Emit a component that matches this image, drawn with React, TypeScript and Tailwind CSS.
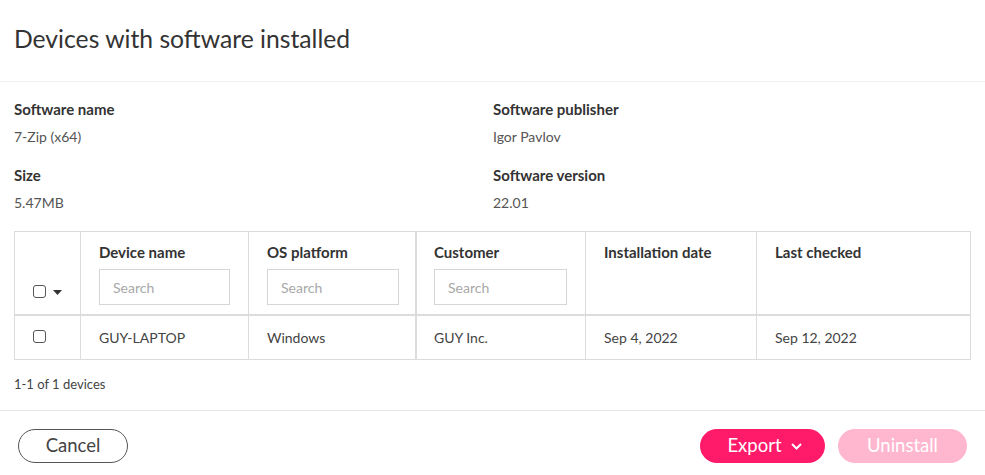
import React from "react";

const font = { fontFamily: '"Source Sans Pro", Lato, "Noto Sans", sans-serif' };

function Checkbox() {
  return <span className="inline-block w-[13px] h-[13px] border border-[#555] rounded-[3px] bg-white" />;
}

function SearchBox({ w }: { w: string }) {
  return (
    <div className={`mt-[7px] h-[36px] ${w} border border-[#d6d6d6] flex items-center pl-[13px] text-[14px] font-normal text-[#a8a8a8]`}>
      Search
    </div>
  );
}

export default function App() {
  return (
    <div className="w-[985px] h-[475px] bg-white text-[#333] overflow-hidden" style={font}>
      <div className="h-[82px] border-b border-[#efefef] flex items-center pl-[14px]">
        <h1 className="text-[24.7px] text-[#333] leading-none -mt-[3px]">Devices with software installed</h1>
      </div>

      <div className="px-[14px] pt-[17px]">
        <div className="grid grid-cols-[479px_1fr] gap-y-[18px]">
          <div>
            <div className="text-[15px] font-bold leading-[20px] text-[#333]">Software name</div>
            <div className="text-[14px] leading-[20px] text-[#555] mt-[8px]">7-Zip (x64)</div>
          </div>
          <div>
            <div className="text-[15px] font-bold leading-[20px] text-[#333]">Software publisher</div>
            <div className="text-[14px] leading-[20px] text-[#555] mt-[8px]">Igor Pavlov</div>
          </div>
          <div>
            <div className="text-[15px] font-bold leading-[20px] text-[#333]">Size</div>
            <div className="text-[14px] leading-[20px] text-[#555] mt-[8px]">5.47MB</div>
          </div>
          <div>
            <div className="text-[15px] font-bold leading-[20px] text-[#333]">Software version</div>
            <div className="text-[14px] leading-[20px] text-[#555] mt-[8px]">22.01</div>
          </div>
        </div>

        <div className="mt-[18px] w-[957px] border border-[#dcdcdc]">
          <div className="grid grid-cols-[66px_168px_168px_169px_171px_1fr] h-[84px] border-b-2 border-[#dcdcdc] text-[15px] font-bold text-[#333]">
            <div className="border-r border-[#dcdcdc] flex items-end pb-[16px] pl-[18px] gap-[7px]">
              <Checkbox />
              <svg width="9" height="5" viewBox="0 0 9 5" className="mb-[3px]"><path d="M0 0h9L4.5 5z" fill="#333" /></svg>
            </div>
            <div className="border-r border-[#dcdcdc] pl-[18px] pt-[10px]">
              <div className="leading-[20px]">Device name</div>
              <SearchBox w="w-[131px]" />
            </div>
            <div className="border-r-2 border-[#dcdcdc] pl-[18px] pt-[10px]">
              <div className="leading-[20px]">OS platform</div>
              <SearchBox w="w-[132px]" />
            </div>
            <div className="border-r border-[#dcdcdc] pl-[17px] pt-[10px]">
              <div className="leading-[20px]">Customer</div>
              <SearchBox w="w-[133px]" />
            </div>
            <div className="border-r border-[#dcdcdc] pl-[18px] pt-[10px]">
              <div className="leading-[20px]">Installation date</div>
            </div>
            <div className="pl-[18px] pt-[10px]">
              <div className="leading-[20px]">Last checked</div>
            </div>
          </div>
          <div className="grid grid-cols-[66px_168px_168px_169px_171px_1fr] h-[43px] text-[14px] text-[#444]">
            <div className="border-r border-[#dcdcdc] flex items-center pl-[18px] pb-[2px]">
              <Checkbox />
            </div>
            <div className="border-r border-[#dcdcdc] flex items-center pl-[18px]">GUY-LAPTOP</div>
            <div className="border-r-2 border-[#dcdcdc] flex items-center pl-[18px]">Windows</div>
            <div className="border-r border-[#dcdcdc] flex items-center pl-[17px]">GUY Inc.</div>
            <div className="border-r border-[#dcdcdc] flex items-center pl-[18px]">Sep 4, 2022</div>
            <div className="flex items-center pl-[18px]">Sep 12, 2022</div>
          </div>
        </div>

        <div className="h-[50px] flex items-center text-[13px] text-[#444]">1-1 of 1 devices</div>
      </div>

      <div className="border-t border-[#e6e6e6] h-[66px] flex items-start justify-between pt-[18px] pl-[18px] pr-[18px]">
        <button className="w-[110px] h-[34px] rounded-full border border-[#555] text-[18.5px] text-[#444] flex items-center justify-center">
          Cancel
        </button>
        <div className="flex items-center gap-[13px]">
          <button className="w-[125px] h-[34px] rounded-full bg-[#ff1a6a] text-white text-[18.5px] flex items-center justify-center gap-[9px] pl-[4px]">
            Export
            <svg width="11" height="7" viewBox="0 0 11 7"><path d="M1 1l4.5 4.5L10 1" stroke="white" strokeWidth="2" fill="none" /></svg>
          </button>
          <button className="w-[129px] h-[34px] rounded-full bg-[#ffb6cf] text-white text-[18.5px] flex items-center justify-center">
            Uninstall
          </button>
        </div>
      </div>
    </div>
  );
}
